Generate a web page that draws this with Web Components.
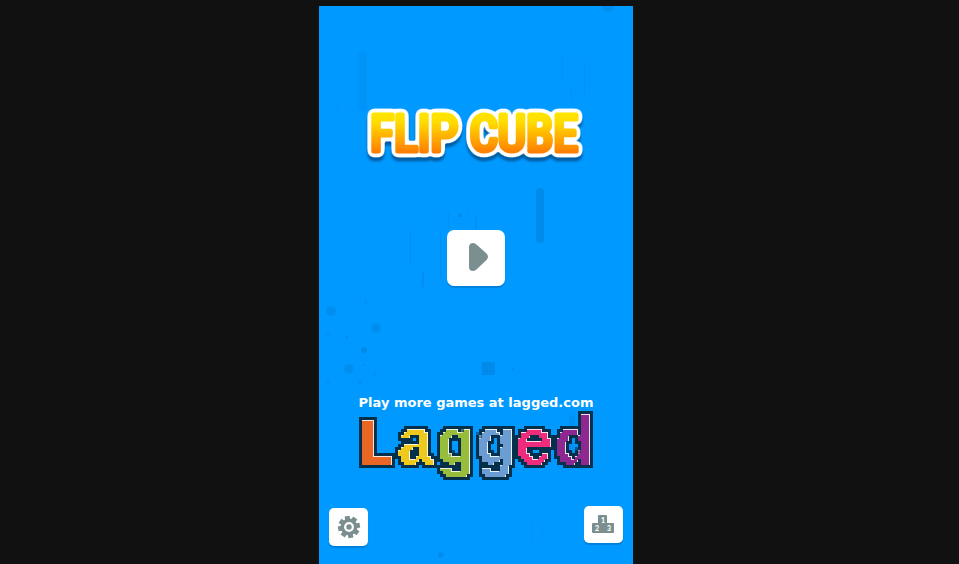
<!DOCTYPE html>
<html lang="en">
<head>
<meta charset="utf-8">
<meta name="viewport" content="width=device-width, initial-scale=1">
<title>Flip Cube</title>
<style>
  body { margin: 0; background: #111; font-family: Lato, "Liberation Sans", sans-serif; }
</style>
</head>
<body>
<flip-cube-game></flip-cube-game>
<script>
  class BaseElement extends HTMLElement {
    connectedCallback() {
      if (this.shadowRoot) return;
      this.attachShadow({ mode: "open" }).innerHTML = this.render();
    }
  }

  // Faint falling pieces behind the menu
  customElements.define("game-particles", class extends BaseElement {
    render() {
      return `
      <style>
        :host { display: block; }
        svg { display: block; width: 100%; height: 100%; }
      </style>
      <svg viewBox="0 0 314 558" preserveAspectRatio="xMidYMid slice" aria-hidden="true">
        <g fill="#0070c0" fill-opacity=".32">
          <rect x="217" y="182" width="8" height="55" rx="4"/>
          <rect x="163" y="356" width="13" height="13"/>
          <circle cx="45" cy="344" r="3"/>
          <circle cx="12" cy="305" r="5" opacity=".7"/>
          <circle cx="57" cy="322" r="5" opacity=".7"/>
          <circle cx="30" cy="363" r="5" opacity=".7"/>
          <circle cx="289" cy="0" r="6" opacity=".8"/>
          <circle cx="122" cy="549" r="2.5"/>
          <circle cx="41" cy="376" r="1.5"/>
          <circle cx="47" cy="296" r="1.5" opacity=".7"/>
          <circle cx="9" cy="328" r="1.5" opacity=".7"/>
          <circle cx="28" cy="331" r="1.5" opacity=".7"/>
          <circle cx="45" cy="359" r="1"/>
          <circle cx="56" cy="368" r="1.5" opacity=".6"/>
          <circle cx="9" cy="376" r="1.5" opacity=".6"/>
          <circle cx="194" cy="363" r="1.5" opacity=".7"/>
          <rect x="139" y="207" width="4" height="4" opacity=".8"/>
          <rect x="148" y="209" width="2" height="1" opacity=".7"/>
          <rect x="142" y="217" width="1" height="1" opacity=".7"/>
          <rect x="129" y="206" width="1" height="18" opacity=".6"/>
          <rect x="156" y="210" width="2" height="14" opacity=".5"/>
          <rect x="91" y="224" width="1" height="32" opacity=".8"/>
          <rect x="121" y="228" width="1" height="46" opacity=".6"/>
          <rect x="103" y="266" width="2" height="15" opacity=".7"/>
          <rect x="39" y="45" width="9" height="60" rx="4" opacity=".35"/>
          <rect x="243" y="51" width="1" height="24" opacity=".5"/>
          <rect x="265" y="55" width="1" height="33" opacity=".5"/>
          <rect x="252" y="82" width="1" height="11" opacity=".4"/>
          <circle cx="19" cy="101" r="2" opacity=".25"/>
          <rect x="250" y="409" width="6" height="39" rx="3" opacity=".6"/>
          <rect x="213" y="517" width="1" height="18" opacity=".2"/>
          <rect x="223" y="517" width="1" height="18" opacity=".2"/>
        </g>
      </svg>`;
    }
  });

  customElements.define("game-title", class extends BaseElement {
    render() {
      return `
      <style>
        :host { display: block; }
        h1 { margin: 0; }
        svg { display: block; width: 100%; height: 60px; overflow: visible; }
        text {
          font: 400 50px "Liberation Sans Narrow", "Roboto Condensed", "DejaVu Sans Condensed", sans-serif;
          fill: url(#gold); stroke: url(#gold); stroke-width: 5px; stroke-linejoin: round; stroke-linecap: round;
        }
      </style>
      <h1><svg viewBox="0 0 220 60">
        <defs>
          <linearGradient id="gold" gradientUnits="userSpaceOnUse" x1="0" y1="8" x2="0" y2="50">
            <stop offset="0" stop-color="#ffe600"/><stop offset=".25" stop-color="#ffdc00"/>
            <stop offset=".95" stop-color="#ff7f00"/>
          </linearGradient>
          <filter id="rim" x="-10%" y="-30%" width="120%" height="170%" color-interpolation-filters="sRGB">
            <feGaussianBlur in="SourceAlpha" stdDeviation="2" result="b"/>
            <feComponentTransfer in="b" result="fat"><feFuncA type="linear" slope="24" intercept="-.3"/></feComponentTransfer>
            <feFlood flood-color="#fff"/><feComposite in2="fat" operator="in" result="white"/>
            <feOffset in="fat" dy="4"/><feGaussianBlur stdDeviation="1" result="s"/>
            <feFlood flood-color="#004a86" flood-opacity=".75"/><feComposite in2="s" operator="in" result="shade"/>
            <feMerge><feMergeNode in="shade"/><feMergeNode in="white"/><feMergeNode in="SourceGraphic"/></feMerge>
          </filter>
        </defs>
        <text x="108" y="47" text-anchor="middle" filter="url(#rim)">FLIP CUBE</text>
      </svg></h1>`;
    }
  });

  customElements.define("icon-button", class extends BaseElement {
    render() {
      return `
      <style>
        :host { display: block; }
        button {
          display: grid; place-items: center; box-sizing: border-box;
          width: var(--w, 39px); height: var(--h, 37px); padding: 0; border: 0;
          border-radius: var(--r, 5px); background: #fff; color: #7b8f91; cursor: pointer;
          box-shadow: 0 2px 1px #0080dc;
        }
      </style>
      <button type="button" aria-label="${this.getAttribute("label")}"><slot></slot></button>`;
    }
  });

  customElements.define("lagged-promo", class extends BaseElement {
    render() {
      return `
      <style>
        :host { display: block; }
        a { display: block; color: #fff; text-decoration: none; text-align: center; }
        span { display: block; font: 700 13px/16px "DejaVu Sans", sans-serif; white-space: nowrap; }
        svg { display: block; width: 100%; height: 70px; overflow: visible; }
        text { font: 700 66px "Liberation Mono", monospace; }
      </style>
      <a href="https://lagged.com"><span>Play more games at lagged.com</span>
      <svg viewBox="0 0 240 70">
        <defs>
          <filter id="block" filterUnits="userSpaceOnUse" x="-3" y="-9" width="246" height="84" color-interpolation-filters="sRGB">
            <feFlood x="-2" y="-8" width="1" height="1" flood-color="#000"/>
            <feComposite x="-3" y="-9" width="3" height="3" in2="SourceGraphic" operator="over" result="cell"/>
            <feTile in="cell" result="grid"/>
            <feComposite in="SourceGraphic" in2="grid" operator="in"/>
            <feMorphology operator="dilate" radius="1"/>
            <feComponentTransfer result="pix"><feFuncA type="linear" slope="20" intercept="-8"/></feComponentTransfer>
            <feMorphology in="pix" operator="dilate" radius="3" result="fat"/>
            <feFlood flood-color="#05304b"/><feComposite in2="fat" operator="in" result="edge"/>
            <feOffset in="pix" dx="-1" dy="1" result="moved"/>
            <feComposite in="pix" in2="moved" operator="out" result="rim"/>
            <feFlood flood-color="#fff" flood-opacity=".85"/><feComposite in2="rim" operator="in" result="light"/>
            <feMerge><feMergeNode in="edge"/><feMergeNode in="pix"/><feMergeNode in="light"/></feMerge>
          </filter>
        </defs>
        <text x="119" y="53" text-anchor="middle" filter="url(#block)"><tspan fill="#e96625">L</tspan><tspan fill="#efca1d">a</tspan><tspan fill="#98bd3c">g</tspan><tspan fill="#6b9dd2">g</tspan><tspan fill="#ef2b7c">e</tspan><tspan fill="#8d2890">d</tspan></text>
      </svg></a>`;
    }
  });

  customElements.define("flip-cube-game", class extends BaseElement {
    render() {
      const teeth = [0, 45, 90, 135, 180, 225, 270, 315]
        .map(a => `<rect x="-2.5" y="-11" width="5" height="5" transform="rotate(${a - 10})"/>`).join("");
      return `
      <style>
        :host { display: flex; justify-content: center; box-sizing: border-box; min-height: 100vh; padding: 6px 7px 0 0; }
        main {
          position: relative; display: flex; flex-direction: column; align-items: center;
          box-sizing: border-box; min-height: calc(100vh - 6px); aspect-ratio: 9 / 16;
          padding: 98px 10px 18px; background: #0099ff; overflow: hidden;
        }
        game-particles { position: absolute; inset: 0; }
        game-title, .play, lagged-promo, footer { position: relative; }
        game-title { width: 220px; }
        .play { --w: 58px; --h: 56px; --r: 7px; margin-top: 66px; }
        lagged-promo { width: 240px; margin-top: 109px; }
        footer { display: flex; justify-content: space-between; align-self: stretch; align-items: flex-end; margin-top: auto; height: 40px; }
        .settings { --h: 38px; }
        .board { align-self: flex-start; }
        svg { display: block; }
        svg text { font: 900 7px Lato, sans-serif; fill: #fff; text-anchor: middle; }
      </style>
      <main>
        <game-particles></game-particles>
        <game-title></game-title>
        <icon-button class="play" label="Play">
          <svg width="30" height="34" viewBox="0 0 30 34"><path fill="currentColor" d="M8 6.500Q8 2 12 2Q14 2 16 4L25.500 12.500Q28.500 15.800 25.500 19L16 28Q14 30 12 30Q8 30 8 26Z"/></svg>
        </icon-button>
        <lagged-promo></lagged-promo>
        <footer>
          <icon-button class="settings" label="Settings">
            <svg width="24" height="24" viewBox="-12 -12 24 24"><g fill="currentColor">${teeth}</g>
              <circle r="6.700" fill="none" stroke="currentColor" stroke-width="3.500"/><circle r="2.700" fill="currentColor"/></svg>
          </icon-button>
          <icon-button class="board" label="Leaderboard">
            <svg width="24" height="20" viewBox="0 0 24 20"><path fill="currentColor" d="M8 0h7q1 0 1 1v7h6q1 0 1 1v8q0 1-1 1H2q-1 0-1-1v-8q0-1 1-1h5V1q0-1 1-1z"/>
              <text x="12" y="8">1</text><text x="6" y="16">2</text><text x="18" y="16">3</text></svg>
          </icon-button>
        </footer>
      </main>`;
    }
  });
</script>
</body>
</html>
